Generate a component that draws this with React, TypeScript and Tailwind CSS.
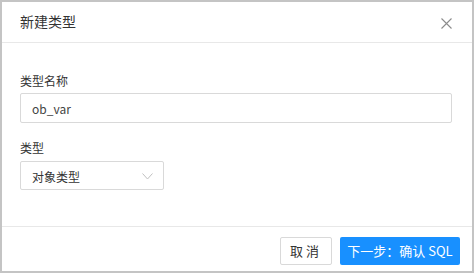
import { useState } from "react";

const font = { fontFamily: '"Noto Sans CJK SC", "Noto Sans", sans-serif' };

export default function App() {
  const [name, setName] = useState("ob_var");

  return (
    <div className="w-[474px] h-[273px] bg-[#c4c4c4] p-[2px]" style={font}>
      <div className="flex flex-col h-[269px] bg-white">
        <div className="flex items-center justify-between h-[41px] px-[18px] border-b border-[#e8e8e8]">
          <span className="text-[14px] text-[#333] leading-[20px] -mt-[3px]">新建类型</span>
          <button className="flex items-center justify-center w-[12px] h-[12px] mt-[2px] mr-[2px]">
            <svg width="11" height="11" viewBox="0 0 11 11" fill="none">
              <path d="M0.5 0.5L10.5 10.5M10.5 0.5L0.5 10.5" stroke="#8c8c8c" strokeWidth="1.1" />
            </svg>
          </button>
        </div>
        <div className="flex-1 flex flex-col px-[18px] pt-[28px]">
          <label className="text-[12px] text-[#333] leading-[20px] mb-[2px]">类型名称</label>
          <input
            className="h-[30px] w-[432px] px-[11px] text-[12px] text-[#444] border border-[#d9d9d9] rounded-[2px] outline-none"
            style={font}
            value={name}
            onChange={(e) => setName(e.target.value)}
          />
          <label className="text-[12px] text-[#333] leading-[20px] mt-[15px] mb-[3px]">类型</label>
          <div className="flex items-center justify-between h-[29px] w-[144px] pl-[11px] pr-[10px] border border-[#d9d9d9] rounded-[2px]">
            <span className="text-[12px] text-[#333] leading-none mt-[2px]">对象类型</span>
            <svg width="11" height="7" viewBox="0 0 11 7" fill="none" className="mt-[1px]">
              <path d="M0.5 0.5L5.5 6L10.5 0.5" stroke="#c0c0c0" strokeWidth="1" />
            </svg>
          </div>
        </div>
        <div className="flex items-start justify-end gap-[8px] h-[45px] border-t border-[#e8e8e8] pt-[10px] pr-[12px]">
          <button className="h-[28px] w-[52px] text-[13px] text-[#333] border border-[#d9d9d9] rounded-[2px] bg-white tracking-[3px]">
            取消
          </button>
          <button className="h-[28px] w-[120px] text-[13px] text-white bg-[#1890ff] rounded-[2px]">
            下一步：确认 SQL
          </button>
        </div>
      </div>
    </div>
  );
}
